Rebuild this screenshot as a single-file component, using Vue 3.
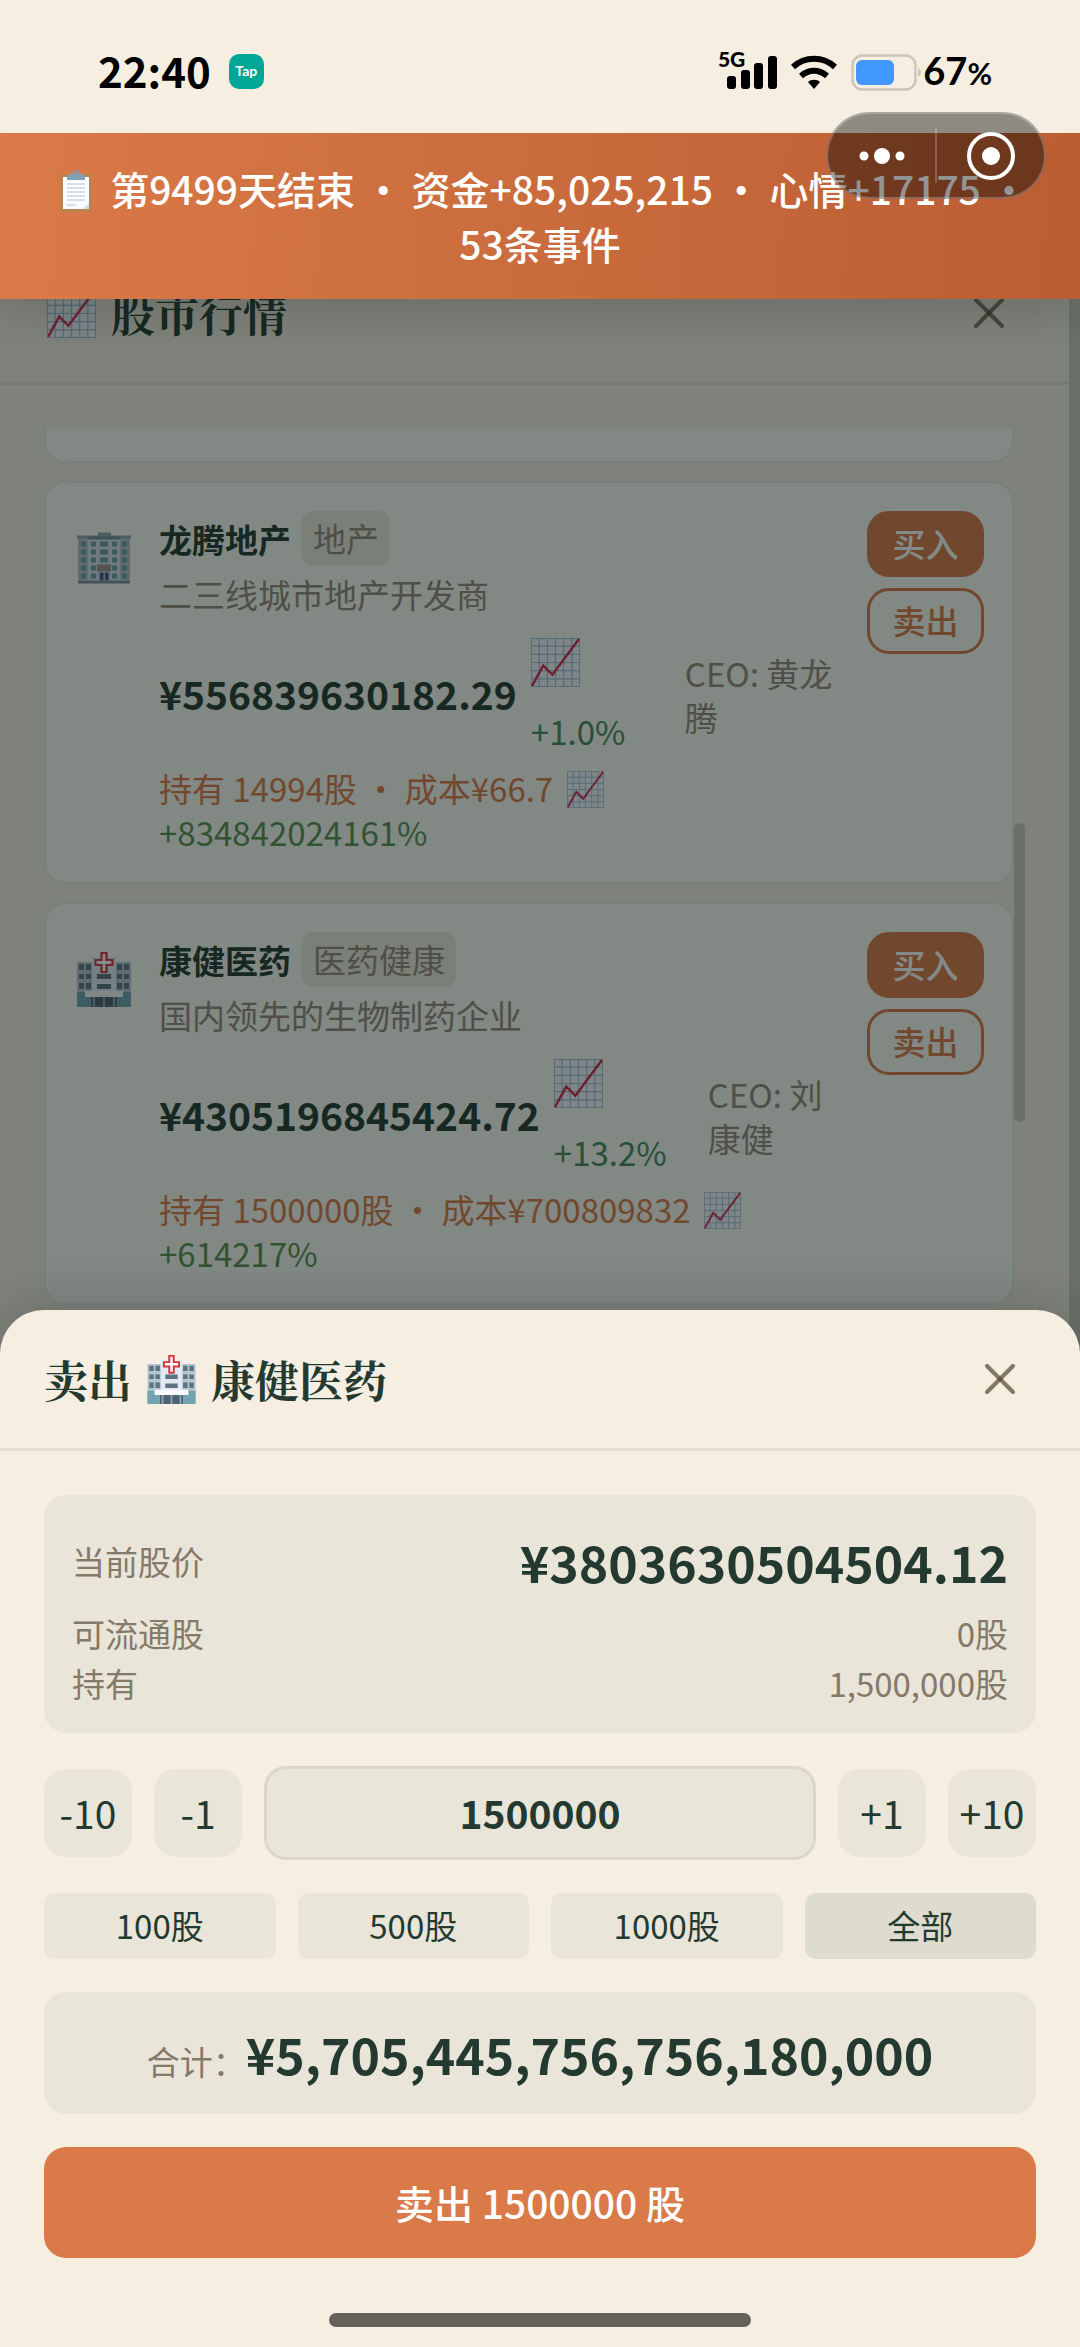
<script setup>
import { ref, computed } from 'vue'

const owned = 1500000
const amount = ref(1500000)

const stocks = [
  {
    icon: 'office', name: '龙腾地产', sector: '地产', desc: '二三线城市地产开发商',
    price: '¥556839630182.29', change: '+1.0%', ceo: '黄龙腾',
    holding: '持有 14994股 · 成本¥66.7', profit: '+834842024161%',
  },
  {
    icon: 'hospital', name: '康健医药', sector: '医药健康', desc: '国内领先的生物制药企业',
    price: '¥4305196845424.72', change: '+13.2%', ceo: '刘康健',
    holding: '持有 1500000股 · 成本¥700809832', profit: '+614217%',
  },
]

const presets = [
  { label: '100股', value: 100 },
  { label: '500股', value: 500 },
  { label: '1000股', value: 1000 },
  { label: '全部', value: owned },
]

const total = computed(() => {
  const cents = BigInt(amount.value || 0) * 380363050450412n
  return (cents / 100n).toLocaleString('en-US')
})

function step(n) {
  amount.value = Math.min(owned, Math.max(0, Number(amount.value) + n))
}
</script>

<template>
  <div class="screen">
    <svg class="sprite" aria-hidden="true">
      <symbol id="chart" viewBox="0 0 48 48">
        <rect x="0.5" y="0.5" width="47" height="47" fill="#f3f7fb" stroke="#a9c0d4" />
        <path d="M8 0V48M16 0V48M24 0V48M32 0V48M40 0V48M0 8H48M0 16H48M0 24H48M0 32H48M0 40H48" stroke="#9fbfd8" stroke-width="1.2" />
        <path d="M1 47L12 27L21 36L47 1" fill="none" stroke="#d6264a" stroke-width="2.4" />
      </symbol>
      <symbol id="office" viewBox="0 0 54 52">
        <rect x="21" y="0" width="13" height="5" fill="#90a4ae" />
        <rect x="1" y="4" width="52" height="44" fill="#b3c3cb" />
        <rect x="11" y="4" width="32" height="44" fill="#d5dfe4" />
        <rect x="0" y="3" width="54" height="3" fill="#90a4ae" />
        <rect x="11" y="4" width="32" height="3" fill="#78909c" />
        <path d="M4 9h5v5h-5zM14 9h5v5h-5zM23 9h8v5h-8zM35 9h5v5h-5zM45 9h5v5h-5zM4 17h5v5h-5zM14 17h5v5h-5zM23 17h8v5h-8zM35 17h5v5h-5zM45 17h5v5h-5zM4 25h5v5h-5zM14 25h5v5h-5zM23 25h8v5h-8zM35 25h5v5h-5zM45 25h5v5h-5zM4 33h5v5h-5zM14 33h5v5h-5zM35 33h5v5h-5zM45 33h5v5h-5zM4 41h5v5h-5zM14 41h5v5h-5zM35 41h5v5h-5zM45 41h5v5h-5z" fill="#6f9ea6" />
        <rect x="20" y="32" width="14" height="7" fill="#9d958f" />
        <rect x="21" y="39" width="12" height="9" fill="#b7c7e2" />
        <path d="M23 40h3.500v8h-3.500zM28 40h3.500v8h-3.500z" fill="#41567f" />
        <rect x="1" y="48" width="52" height="3" fill="#78909c" />
      </symbol>
      <symbol id="hospital" viewBox="0 0 54 55">
        <path d="M0 10H54V55H0z" fill="#b4c5d0" />
        <path d="M15 5H39V55H15z" fill="#e3e9f2" />
        <path d="M0 40H54V55H0z" fill="#72a4b0" />
        <path d="M2 12h5v6h-5zM9 12h5v6h-5zM40 12h5v6h-5zM47 12h5v6h-5zM2 22h5v5h-5zM9 22h5v5h-5zM40 22h5v5h-5zM47 22h5v5h-5zM2 31h5v6h-5zM9 31h5v6h-5zM40 31h5v6h-5zM47 31h5v6h-5zM20 22h14v5h-14zM20 32h14v5h-14z" fill="#5d7383" />
        <path d="M8 39H46V45H8z" fill="#f7f9fc" />
        <path d="M13 45H41V55H13z" fill="#8ea5b2" />
        <path d="M18 45h8v10h-8zM28 45h8v10h-8zM14 45h2v10h-2zM38 45h2v10h-2z" fill="#4f6373" />
        <path d="M24.500 1h5v7h6v5h-6v7h-5v-7h-6V8h6z" fill="#fff" stroke="#d8323c" stroke-width="2.200" />
      </symbol>
      <symbol id="clipboard" viewBox="0 0 34 44">
        <rect x="1" y="5" width="32" height="38" rx="2" fill="#b98250" />
        <path d="M4 8H30V40H4z" fill="#fbfcfd" />
        <path d="M24 40L30 34V40z" fill="#d3dae0" />
        <path d="M8 15H26M8 19H26M8 23H26M8 27H26M8 31H26M8 36H17" stroke="#b6c0c9" stroke-width="1.200" />
        <path d="M8 11V8C8 6 10 5 13 5C14 2 15 1 17 1S20 2 21 5C24 5 26 6 26 8V11z" fill="#7fa0b5" />
        <circle cx="17" cy="4" r="1.600" fill="#d97a48" />
      </symbol>
    </svg>

    <!-- Market panel, dimmed behind the sell sheet -->
    <section class="market">
      <div class="panel">
        <header class="head">
          <h2 class="title"><svg class="emoji"><use href="#chart" /></svg><span>股市行情</span></h2>
          <button class="close" aria-label="关闭行情">
            <svg viewBox="0 0 30 30"><path d="M2 2L28 28" /><path d="M28 2L2 28" /></svg>
          </button>
        </header>
        <div class="body">
          <div class="list">
            <div class="stub"></div>
            <article v-for="s in stocks" :key="s.name" class="card">
              <svg class="logo"><use :href="'#' + s.icon" /></svg>
              <div class="info">
                <div class="name-row"><strong>{{ s.name }}</strong><span class="tag">{{ s.sector }}</span></div>
                <p class="desc">{{ s.desc }}</p>
                <div class="quote">
                  <strong class="price">{{ s.price }}</strong>
                  <div class="change"><svg class="emoji"><use href="#chart" /></svg><span>{{ s.change }}</span></div>
                  <span class="ceo">CEO: {{ s.ceo }}</span>
                </div>
                <p class="holding">{{ s.holding }} <svg class="mini"><use href="#chart" /></svg> <span class="profit">{{ s.profit }}</span></p>
              </div>
              <div class="trade">
                <button class="buy">买入</button>
                <button class="sell">卖出</button>
              </div>
            </article>
          </div>
          <div class="track"><div class="thumb"></div></div>
        </div>
      </div>
    </section>

    <div class="status">
      <time>22:40</time>
      <span class="tap">Tap</span>
      <div class="signals">
        <span class="net">5G</span>
        <svg class="cell" viewBox="0 0 50 34">
          <rect x="0" y="21" width="9" height="13" rx="3" /><rect x="14" y="15" width="9" height="19" rx="3" />
          <rect x="27" y="8" width="9" height="26" rx="3" /><rect x="41" y="1" width="9" height="33" rx="3" />
        </svg>
        <svg class="wifi" viewBox="0 0 46 34">
          <path d="M2 12C14 1 32 1 44 12" /><path d="M10 21C18 14 28 14 36 21" />
          <path class="solid" d="M17 27C20 24 26 24 29 27L23 34z" />
        </svg>
        <svg class="battery" viewBox="0 0 72 38">
          <rect x="1.500" y="2.500" width="63" height="34" rx="10" fill="none" stroke="#cdc5b7" stroke-width="2.400" />
          <rect x="5" y="7" width="38" height="25" rx="6" fill="#4098ff" />
          <path d="M67 15C71 16 71 23 67 24z" fill="#cdc5b7" />
        </svg>
        <span class="percent">67<small>%</small></span>
      </div>
    </div>

    <div class="banner"><svg class="clip"><use href="#clipboard" /></svg> 第9499天结束 · 资金+85,025,215 · 心情+17175 · 53条事件</div>

    <div class="capsule">
      <button aria-label="更多">
        <svg viewBox="0 0 48 50"><circle cx="6" cy="25" r="4.500" /><circle cx="24" cy="25" r="8" /><circle cx="42" cy="25" r="4.500" /></svg>
      </button>
      <i class="divider"></i>
      <button aria-label="退出">
        <svg viewBox="0 0 48 50"><circle cx="24" cy="25" r="9" /><circle cx="24" cy="25" r="22" class="ring" /></svg>
      </button>
    </div>

    <section class="sheet">
      <header class="head">
        <h2 class="title"><span>卖出</span><svg class="emoji"><use href="#hospital" /></svg><span>康健医药</span></h2>
        <button class="close" aria-label="关闭">
          <svg viewBox="0 0 30 30"><path d="M2 2L28 28" /><path d="M28 2L2 28" /></svg>
        </button>
      </header>
      <div class="form">
        <dl class="facts">
          <div class="current"><dt>当前股价</dt><dd>¥3803630504504.12</dd></div>
          <div><dt>可流通股</dt><dd>0股</dd></div>
          <div><dt>持有</dt><dd>1,500,000股</dd></div>
        </dl>
        <div class="stepper">
          <button @click="step(-10)">-10</button>
          <button @click="step(-1)">-1</button>
          <input v-model="amount" inputmode="numeric" aria-label="卖出数量" />
          <button @click="step(1)">+1</button>
          <button @click="step(10)">+10</button>
        </div>
        <div class="presets">
          <button v-for="p in presets" :key="p.label" :class="{ all: p.label === '全部' }" @click="amount = p.value">{{ p.label }}</button>
        </div>
        <div class="total"><span>合计：</span><strong>¥{{ total }}</strong></div>
        <button class="submit">卖出 {{ amount }} 股</button>
      </div>
      <div class="home"></div>
    </section>
  </div>
</template>

<style>
body { margin: 0; background: #f5eee1; }
</style>

<style scoped>
* { box-sizing: border-box; margin: 0; }
.screen {
  position: relative;
  display: flex;
  flex-direction: column;
  min-height: 100vh;
  overflow: hidden;
  background: #f5eee1;
  color: #243a30;
  font: 400 33px/44px "Noto Sans CJK SC", sans-serif;
}
button, input { font: inherit; color: inherit; border: 0; padding: 0 0 2px; background: none; }
svg { display: block; flex: none; }
.sprite { position: absolute; width: 0; height: 0; }

.market { position: absolute; inset: 0; padding-top: 244px; background: #c9cabd; }
.market::after { content: ""; position: absolute; inset: 0; background: rgba(10, 21, 20, 0.5); }
.panel { display: flex; flex-direction: column; height: 100%; margin-right: 11px; background: #f5eee1; }
.head {
  display: flex;
  align-items: center;
  justify-content: space-between;
  flex: none;
  height: 141px;
  padding: 0 56px 0 44px;
  border-bottom: 3px solid #e5dfd2;
}
.title {
  display: flex;
  align-items: center;
  gap: 12px;
  font: 700 44px/60px "Noto Serif CJK SC", "Noto Serif SC", "Noto Sans CJK SC", serif;
}
.emoji { width: 49px; height: 49px; }
.title .emoji { margin: 0 3px; }
.close { display: grid; place-items: center; width: 48px; height: 70px; padding: 0; }
.close svg { width: 30px; height: 30px; }
.close path { stroke: rgba(85, 68, 50, 0.7); stroke-width: 4; stroke-linecap: round; }

.body { display: flex; flex: 1; min-height: 0; padding: 44px 44px 0; }
.list { flex: 1; min-width: 0; overflow: hidden; }
.stub, .card { border: 2px solid #e6ebe4; border-radius: 22px; background: #fafbf2; }
.stub { height: 34px; border-top: 0; border-radius: 0 0 22px 22px; }
.card { display: flex; align-items: flex-start; margin-top: 18px; padding: 28px; }
.track { width: 11px; padding-top: 394px; }
.thumb { height: 299px; border-radius: 6px; background: #c9cabd; }
.logo { width: 54px; height: 55px; margin: 20px 28px 0 3px; }
.info { flex: 1; min-width: 0; }
.name-row { display: flex; align-items: center; gap: 11px; height: 55px; }
.tag { padding: 0 11px; line-height: 55px; border-radius: 11px; background: #ebe8dc; }
.tag, .desc, .ceo { color: #94897a; }
.desc { margin-top: 6px; }
.quote { display: flex; align-items: center; gap: 14px; height: 142px; margin-top: 8px; }
.price { padding-bottom: 4px; font-size: 39px; }
.change { display: flex; flex-direction: column; width: 110px; gap: 22px; color: #468a58; }
.ceo { width: 152px; margin-left: 30px; }
.holding { height: 88px; color: #d97a48; }
.mini { display: inline-block; width: 37px; height: 37px; margin-left: 6px; vertical-align: -6px; }
.profit { color: #5a9150; }
.trade { display: flex; flex-direction: column; gap: 11px; margin-left: 12px; }
.trade button { width: 117px; height: 66px; border: 3px solid #d97a48; border-radius: 22px; font-weight: 500; }
.buy { background: #d97a48; color: #fff; }
.sell { color: #d97a48; }

.status { position: relative; z-index: 1; display: flex; align-items: center; height: 133px; padding: 10px 88px 0 98px; background: #f5eee1; color: #000; }
.status time { padding-bottom: 4px; font-size: 42px; font-weight: 700; }
.tap { width: 35px; height: 35px; margin-left: 18px; border-radius: 10px; background: #00a797; color: #fff; font: 700 14px/33px Lato, sans-serif; text-align: center; }
.signals { display: flex; align-items: center; margin-left: auto; }
.net { align-self: flex-start; margin-right: -18px; font: 900 21px/22px Lato, sans-serif; }
.cell { width: 50px; height: 34px; }
.wifi { width: 46px; height: 34px; margin: 0 14px; }
.wifi path { fill: none; stroke: #000; stroke-width: 6; }
.wifi .solid { fill: #000; stroke: none; }
.battery { width: 72px; height: 38px; }
.percent { font: 700 38px/44px Lato, sans-serif; }
.percent small { font-size: 30px; }

.banner {
  position: relative;
  padding: 28px 44px;
  background: linear-gradient(95deg, #da7a48, #ba5d32);
  box-shadow: 0 11px 44px rgba(20, 30, 25, 0.2);
  color: #fff;
  font-size: 39px;
  font-weight: 500;
  line-height: 55px;
  text-align: center;
}
.clip { display: inline-block; width: 34px; height: 44px; margin: 0 8px; vertical-align: -8px; }
.capsule {
  position: absolute;
  z-index: 2;
  top: 112px;
  right: 34px;
  display: flex;
  align-items: center;
  width: 220px;
  height: 87px;
  border: 2px solid rgba(255, 255, 255, 0.25);
  border-radius: 44px;
  background: rgba(0, 0, 0, 0.42);
}
.capsule button { display: grid; place-items: center; flex: 1; height: 100%; padding: 0; }
.capsule svg { width: 48px; height: 50px; fill: #fff; }
.capsule .ring { fill: none; stroke: #fff; stroke-width: 4; }
.divider { width: 2px; height: 55px; background: rgba(255, 255, 255, 0.22); }

.sheet { position: relative; margin-top: auto; border-radius: 44px 44px 0 0; background: #f5eee1; box-shadow: 0 -11px 44px rgba(20, 30, 25, 0.15); }
.form { display: flex; flex-direction: column; gap: 33px; padding: 44px 44px 55px; }
.facts { padding: 25px 28px; border-radius: 22px; background: #e9e5d9; color: #857968; line-height: 50px; }
.facts div { display: flex; align-items: center; justify-content: space-between; }
.facts .current { height: 82px; margin-bottom: 6px; }
.current dd { color: #243a30; font-size: 50px; font-weight: 700; }
.stepper { display: flex; align-items: center; gap: 22px; font-size: 39px; }
.stepper button { width: 88px; height: 88px; border-radius: 22px; background: #e9e5d9; }
.stepper input { flex: 1; min-width: 0; height: 94px; border: 3px solid #dad7ca; border-radius: 22px; background: #e9e5d9; font-weight: 700; text-align: center; }
.presets { display: grid; grid-template-columns: repeat(4, 1fr); gap: 22px; }
.presets button { height: 66px; border-radius: 11px; background: #e9e5d9; }
.presets .all { background: #dedccf; }
.total { display: flex; align-items: baseline; justify-content: center; height: 122px; border-radius: 22px; background: #e9e5d9; color: #857968; }
.total strong { color: #243a30; font-size: 50px; line-height: 122px; }
.submit { height: 111px; border-radius: 22px; background: #d97a48; color: #fff; font-size: 39px; font-weight: 500; }
.home { width: 39%; height: 14px; margin: 0 auto 20px; border-radius: 7px; background: #65625b; }
</style>
